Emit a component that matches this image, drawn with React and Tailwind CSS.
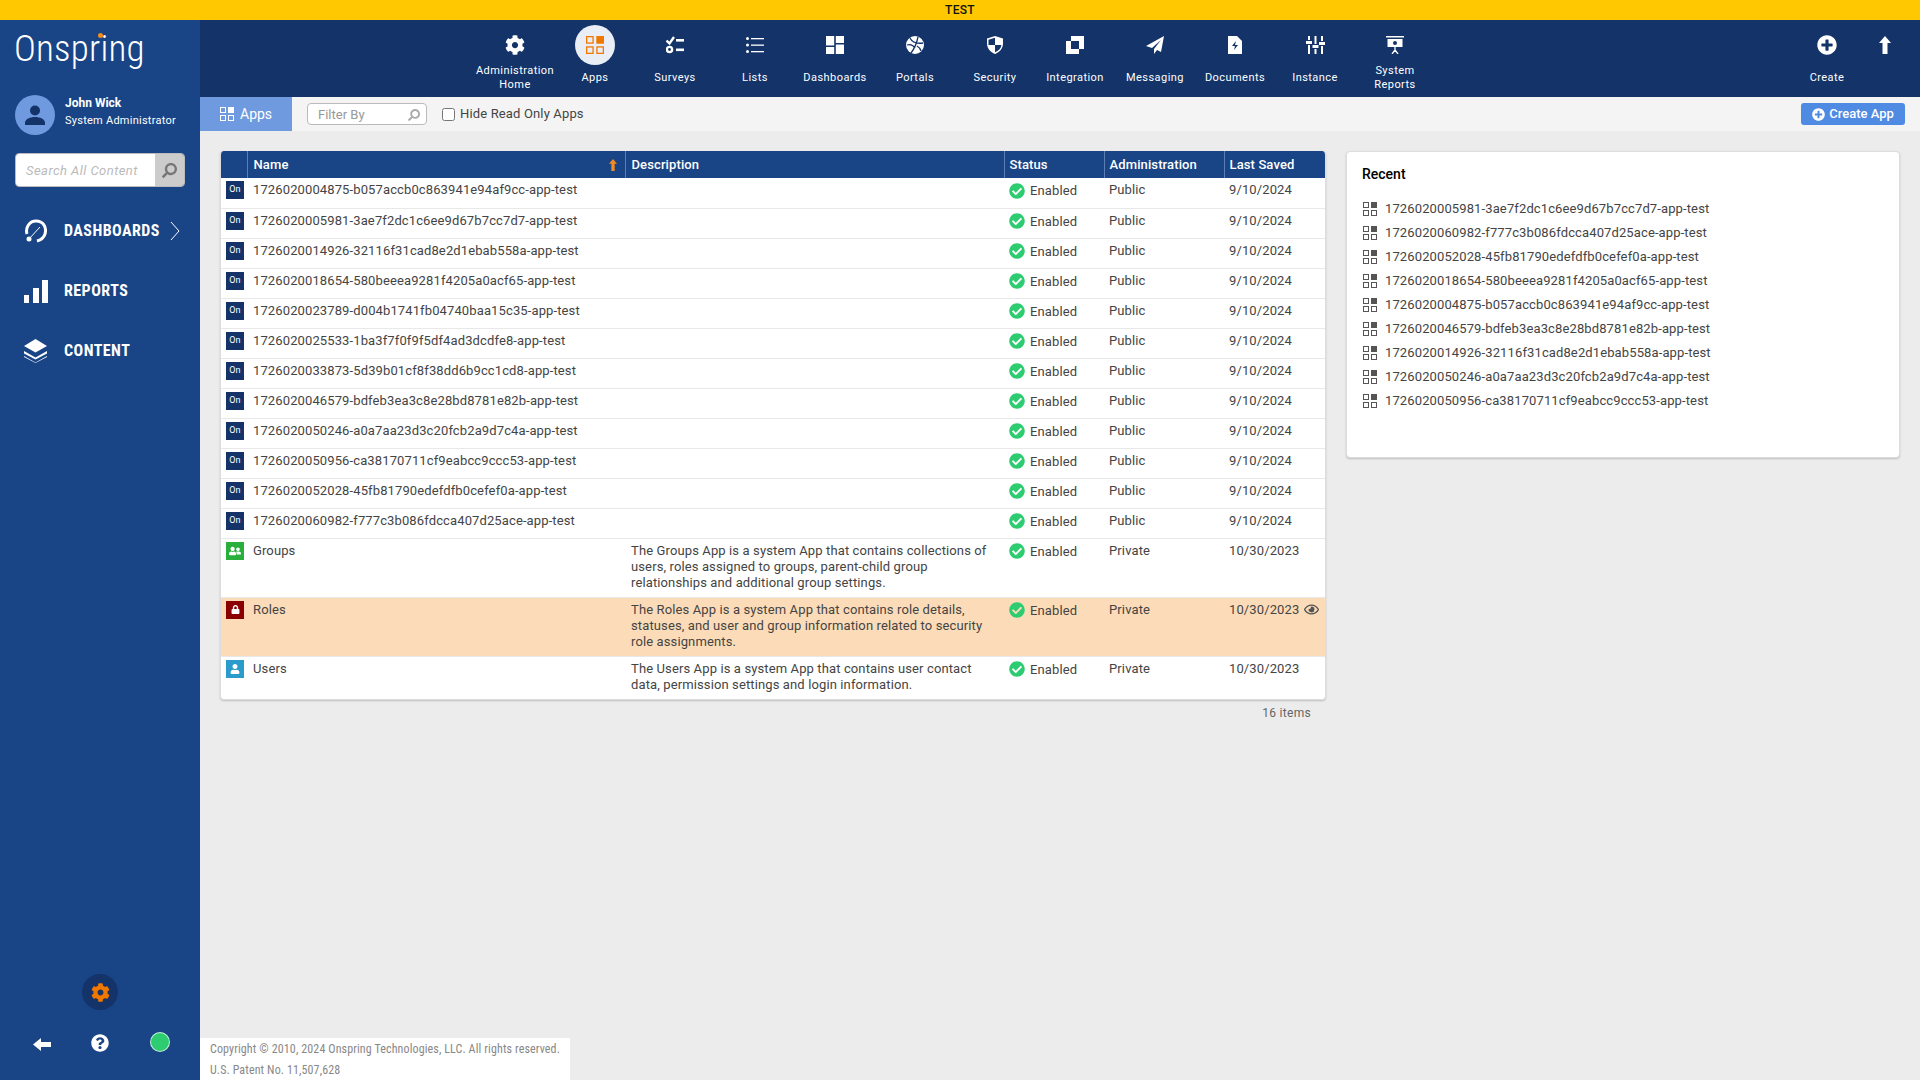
import { FaCog, FaPlusCircle, FaQuestionCircle, FaSearch, FaRegEye, FaCheckCircle, FaUser, FaLock, FaUserFriends } from "react-icons/fa";

const GridIcon = ({ size = 14, className = "", filled = "currentColor" }) => (
    <svg width={size} height={size} viewBox="0 0 14 14" className={className}>
        <rect x="0.5" y="0.5" width="5" height="5" fill="none" stroke="currentColor" />
        <rect x="8" y="0" width="6" height="6" fill={filled} />
        <rect x="0.5" y="8.5" width="5" height="5" fill="none" stroke="currentColor" />
        <rect x="8.5" y="8.5" width="5" height="5" fill="none" stroke="currentColor" />
    </svg>
);

const BlockArrowUp = ({ className = "", width = 12, height = 18 }) => (
    <svg width={width} height={height} viewBox="0 0 12 18" fill="currentColor" className={className}>
        <path d="M6 0l6 7H8.500v11h-5V7H0z" />
    </svg>
);

const SurveysIcon = () => (
    <svg width="18" height="18" viewBox="0 0 18 18" fill="white">
        <path d="M0.500 4.500l3 3 4.500-6.500" fill="none" stroke="white" strokeWidth="2.400" />
        <rect x="10" y="3" width="8" height="2.600" />
        <circle cx="3.500" cy="13.500" r="2.600" fill="none" stroke="white" strokeWidth="2.400" />
        <rect x="10" y="12.500" width="8" height="2.600" />
    </svg>
);
const ListsIcon = () => (
    <svg width="18" height="16" viewBox="0 0 18 16" fill="white">
        <circle cx="1.500" cy="1.500" r="1.500" />
        <rect x="5" y="1" width="13" height="1.300" />
        <circle cx="1.500" cy="8" r="1.500" />
        <rect x="5" y="7.500" width="13" height="1.300" />
        <circle cx="1.500" cy="14.500" r="1.500" />
        <rect x="5" y="14" width="13" height="1.300" />
    </svg>
);
const DashIcon = () => (
    <svg width="18" height="18" viewBox="0 0 18 18" fill="white">
        <rect x="0" y="0" width="8.200" height="9.500" />
        <rect x="9.800" y="0" width="8.200" height="7" />
        <rect x="0" y="11" width="8.200" height="7" />
        <rect x="9.800" y="8.500" width="8.200" height="9.500" />
    </svg>
);
const PortalIcon = () => (
    <svg width="18" height="18" viewBox="0 0 18 18">
        <circle cx="9" cy="9" r="9" fill="white" />
        <path d="M4 2c2 4 6 6 13 5M1 9c3-1 6 0 8 3M12 1C11 6 9 12 5 17M15 15c-1-3-2-4-4-5" fill="none" stroke="#133369" strokeWidth="1.300" />
    </svg>
);
const ShieldIcon = () => (
    <svg width="16" height="18" viewBox="0 0 16 18">
        <path d="M8 0l8 2.500v5c0 5-3.500 8.700-8 10.500-4.500-1.800-8-5.500-8-10.500v-5z" fill="white" />
        <path d="M8 1.800V9H1.500V3.700zM8 9h6.400C14 12.500 11.500 15 8 16.300z" fill="#133369" />
    </svg>
);
const IntegrationIcon = () => (
    <svg width="18" height="18" viewBox="0 0 18 18" fill="white">
        <rect x="5" y="0" width="13" height="13" />
        <rect x="0" y="5" width="13" height="13" />
        <rect x="5" y="5" width="8" height="8" fill="#133369" />
    </svg>
);
const PlaneIcon = () => (
    <svg width="18" height="18" viewBox="0 0 18 18" fill="white">
        <path d="M18 0L0 10l6 2 9-8-7 9v5l3-4 4 2z" />
    </svg>
);
const DocIcon = () => (
    <svg width="14" height="18" viewBox="0 0 14 18">
        <path d="M0 0h9l5 5v13H0z" fill="white" />
        <path d="M8 5L4 10h3l-1 4 4-5H7z" fill="#133369" />
    </svg>
);
const SlidersIcon = () => (
    <svg width="19" height="18" viewBox="0 0 19 18" fill="white">
        <rect x="2" y="0" width="2" height="4" />
        <rect x="0" y="5" width="6" height="3" />
        <rect x="2" y="9" width="2" height="9" />
        <rect x="8.500" y="0" width="2" height="8" />
        <rect x="6.500" y="9" width="6" height="3" />
        <rect x="8.500" y="13" width="2" height="5" />
        <rect x="15" y="0" width="2" height="5" />
        <rect x="13" y="6" width="6" height="3" />
        <rect x="15" y="10" width="2" height="8" />
    </svg>
);
const ReportIcon = () => (
    <svg width="18" height="18" viewBox="0 0 18 18" fill="white">
        <rect x="0" y="0" width="18" height="1.500" />
        <path d="M1.500 3h15v8h-15z" />
        <circle cx="9" cy="7" r="2" fill="#133369" />
        <path d="M9 11v3.500M9 14l-3 4M9 14l3 4" stroke="white" strokeWidth="1.300" fill="none" />
    </svg>
);

const NAV = [
    { label: ["Administration", "Home"], icon: <FaCog size={20} color="white" /> },
    { label: ["Apps"], icon: <GridIcon size={18} />, active: true },
    { label: ["Surveys"], icon: <SurveysIcon /> },
    { label: ["Lists"], icon: <ListsIcon /> },
    { label: ["Dashboards"], icon: <DashIcon /> },
    { label: ["Portals"], icon: <PortalIcon /> },
    { label: ["Security"], icon: <ShieldIcon /> },
    { label: ["Integration"], icon: <IntegrationIcon /> },
    { label: ["Messaging"], icon: <PlaneIcon /> },
    { label: ["Documents"], icon: <DocIcon /> },
    { label: ["Instance"], icon: <SlidersIcon /> },
    { label: ["System", "Reports"], icon: <ReportIcon /> },
];

const APPS = [
    "1726020004875-b057accb0c863941e94af9cc-app-test",
    "1726020005981-3ae7f2dc1c6ee9d67b7cc7d7-app-test",
    "1726020014926-32116f31cad8e2d1ebab558a-app-test",
    "1726020018654-580beeea9281f4205a0acf65-app-test",
    "1726020023789-d004b1741fb04740baa15c35-app-test",
    "1726020025533-1ba3f7f0f9f5df4ad3dcdfe8-app-test",
    "1726020033873-5d39b01cf8f38dd6b9cc1cd8-app-test",
    "1726020046579-bdfeb3ea3c8e28bd8781e82b-app-test",
    "1726020050246-a0a7aa23d3c20fcb2a9d7c4a-app-test",
    "1726020050956-ca38170711cf9eabcc9ccc53-app-test",
    "1726020052028-45fb81790edefdfb0cefef0a-app-test",
    "1726020060982-f777c3b086fdcca407d25ace-app-test",
];

const RECENT = [
    "1726020005981-3ae7f2dc1c6ee9d67b7cc7d7-app-test",
    "1726020060982-f777c3b086fdcca407d25ace-app-test",
    "1726020052028-45fb81790edefdfb0cefef0a-app-test",
    "1726020018654-580beeea9281f4205a0acf65-app-test",
    "1726020004875-b057accb0c863941e94af9cc-app-test",
    "1726020046579-bdfeb3ea3c8e28bd8781e82b-app-test",
    "1726020014926-32116f31cad8e2d1ebab558a-app-test",
    "1726020050246-a0a7aa23d3c20fcb2a9d7c4a-app-test",
    "1726020050956-ca38170711cf9eabcc9ccc53-app-test",
];

const SYSTEM = [
    {
        name: "Groups",
        bg: "bg-[#2aae3c]",
        icon: <FaUserFriends size={12} color="white" />,
        desc: "The Groups App is a system App that contains collections of users, roles assigned to groups, parent-child group relationships and additional group settings.",
    },
    {
        name: "Roles",
        bg: "bg-[#8b0000]",
        icon: <FaLock size={9} color="white" />,
        desc: "The Roles App is a system App that contains role details, statuses, and user and group information related to security role assignments.",
        hover: true,
    },
    {
        name: "Users",
        bg: "bg-[#2a9bcb]",
        icon: <FaUser size={10} color="white" />,
        desc: "The Users App is a system App that contains user contact data, permission settings and login information.",
    },
];

function Cells({ status = "Public", saved = "9/10/2024", desc, hover }) {
    return (
        <>
            <td className="align-top pl-[6px] pr-[4px] pt-[4px] leading-4">{desc}</td>
            <td className="align-top pl-[5px] pt-[4px]">
                <div className="flex items-center gap-[5px] leading-4">
                    <FaCheckCircle size={16} className="text-[#2ecc71]" />
                    <span className="pt-[1px]">Enabled</span>
                </div>
            </td>
            <td className="align-top px-[5px] pt-[4px] leading-4">{status}</td>
            <td className="align-top pl-[5px] pt-[4px] leading-4 relative">
                {saved}
                {hover && <FaRegEye size={15} className="absolute right-[6px] top-[4px] text-[#555]" />}
            </td>
        </>
    );
}

export default function App() {
    return (
        <div className="h-screen flex flex-col overflow-hidden bg-[#ececec] font-['Roboto',sans-serif]">
            <div className="h-5 shrink-0 bg-[#ffc800] flex items-center justify-center text-xs font-medium tracking-[0.3px] text-[#111]">TEST</div>

            <div className="flex flex-1 min-h-0">
                <aside className="w-[200px] shrink-0 bg-[#194485] flex flex-col text-white">
                    <div className="h-[75px] pl-[14px] pt-[7px]">
                        <span className="relative inline-block text-[37px] font-light leading-[44px] tracking-[0.2px] [font-stretch:75%]">
                            Onspring
                            <span className="absolute left-[84px] top-[6px] w-[5px] h-[5px] rounded-full bg-[#f58a1f]"></span>
                        </span>
                    </div>

                    <div className="flex items-start gap-[10px] pl-[15px]">
                        <div className="w-10 h-10 rounded-full bg-[#6f9adf] flex items-center justify-center">
                            <svg width="20" height="20" viewBox="0 0 20 20" fill="#133369">
                                <circle cx="10" cy="5.500" r="5" />
                                <path d="M0 20v-2c0-4 5-6 10-6s10 2 10 6v2z" />
                            </svg>
                        </div>
                        <div className="-mt-[1px]">
                            <div className="text-xs font-bold leading-[18px]">John Wick</div>
                            <div className="text-[11px] leading-[17px] tracking-[0.25px]">System Administrator</div>
                        </div>
                    </div>

                    <div className="mx-[15px] mt-[18px] h-[34px] flex rounded-[4px] overflow-hidden border border-[#bbb]">
                        <div className="flex-1 bg-white pl-[10px] text-[13px] italic text-[#bbb] leading-[33px] tracking-[0.45px]">Search All Content</div>
                        <div className="w-[29px] bg-[#ccc] flex items-center justify-center">
                            <FaSearch size={15} className="text-[#777] -scale-x-100" />
                        </div>
                    </div>

                    <nav className="mt-[14px] flex flex-col">
                        <div className="h-[60px] flex items-center pl-[24px]">
                            <svg width="23" height="24" viewBox="0 0 23 24" fill="none" stroke="white" strokeWidth="3">
                                <path d="M3 15C1 8 6 2 12 2c7 0 11 6 9 13-1 3-4 6-8 7" />
                                <path d="M5 20L16 8" strokeWidth="1" />
                                <circle cx="5" cy="20" r="2.500" fill="white" stroke="none" />
                            </svg>
                            <span className="ml-[17px] text-[16px] font-bold tracking-[0.45px] [font-stretch:86%]">DASHBOARDS</span>
                            <svg width="10" height="18" viewBox="0 0 10 18" fill="none" stroke="white" className="ml-[10px]">
                                <path d="M1 0l8 9-8 9" />
                            </svg>
                        </div>
                        <div className="h-[60px] flex items-center pl-[24px]">
                            <svg width="24" height="23" viewBox="0 0 24 23" fill="white">
                                <rect x="0" y="15" width="5" height="8" />
                                <rect x="9" y="8" width="6" height="15" />
                                <rect x="18" y="0" width="6" height="23" />
                            </svg>
                            <span className="ml-[16px] text-[16px] font-bold tracking-[0.45px] [font-stretch:86%]">REPORTS</span>
                        </div>
                        <div className="h-[60px] flex items-center pl-[24px]">
                            <svg width="23" height="24" viewBox="0 0 23 24" fill="white">
                                <path d="M11.500 0L23 7l-11.500 6.500L0 7z" />
                                <path d="M0 12l11.500 6.500L23 12v2.500l-11.500 6L0 14.500z" />
                                <path d="M0 17l11.500 6.500L23 17v1l-11.500 6L0 18z" />
                            </svg>
                            <span className="ml-[17px] text-[16px] font-bold tracking-[0.45px] [font-stretch:86%]">CONTENT</span>
                        </div>
                    </nav>

                    <div className="mt-auto flex justify-center">
                        <div className="w-9 h-9 rounded-full bg-[#133369] flex items-center justify-center">
                            <FaCog size={19} className="text-[#f07800]" />
                        </div>
                    </div>
                    <div className="h-[70px] flex items-start pt-[22px] pl-[33px]">
                        <svg width="18" height="13" viewBox="0 0 18 13" fill="white" className="mt-[6px]">
                            <path d="M0 6.500L8 0v4h10v5H8v4z" />
                        </svg>
                        <FaQuestionCircle size={18} className="ml-[40px] mt-[2px]" />
                        <div className="ml-[41px] w-5 h-5 rounded-full bg-[#2ecc71] border border-white/70"></div>
                    </div>
                </aside>

                <main className="flex-1 min-w-0 flex flex-col">
                    <div className="h-[77px] shrink-0 bg-[#133369] flex text-white pl-[275px]">
                        {NAV.map((item) => (
                            <div key={item.label[0]} className="w-20 flex flex-col items-center">
                                <div className={`mt-[5px] w-10 h-10 rounded-full flex items-center justify-center ${item.active ? "bg-[#e9edf5] text-[#f07800]" : ""}`}>
                                    {item.icon}
                                </div>
                                <div className={`text-[11px] tracking-[0.45px] text-center ${item.label.length > 1 ? "leading-[14px] mt-[-1px]" : "leading-[16px] mt-[5px]"}`}>
                                    {item.label.map((l) => (
                                        <div key={l}>{l}</div>
                                    ))}
                                </div>
                            </div>
                        ))}
                        <div className="ml-auto flex pr-[12px]">
                            <div className="w-[70px] flex flex-col items-center">
                                <div className="mt-[5px] h-10 flex items-center"><FaPlusCircle size={20} /></div>
                                <div className="mt-[5px] text-[11px] leading-[16px] tracking-[0.45px]">Create</div>
                            </div>
                            <div className="w-[46px] flex justify-center">
                                <div className="mt-[5px] h-10 flex items-center"><BlockArrowUp /></div>
                            </div>
                        </div>
                    </div>

                    <div className="h-[34px] shrink-0 bg-[#f4f4f4] flex items-center">
                        <div className="w-[92px] h-full bg-[#6f9adf] text-white flex items-center pl-5 gap-[6px] text-sm">
                            <GridIcon size={14} />
                            Apps
                        </div>
                        <div className="ml-[15px] w-[120px] h-[22px] bg-white border border-[#bbb] rounded-[4px] flex items-center justify-between pl-[10px] pr-[6px] pt-[1px] text-[13px] text-[#999]">
                            Filter By
                            <FaSearch size={12} className="text-[#aaa] -scale-x-100" />
                        </div>
                        <label className="ml-[15px] flex items-center gap-[5px] text-[13px] text-[#444] tracking-[0.15px]">
                            <input type="checkbox" className="w-[13px] h-[13px]" />
                            Hide Read Only Apps
                        </label>
                        <div className="ml-auto mr-[15px] w-[104px] h-[22px] rounded-[3px] bg-[#4f8ae3] text-white text-[13px] font-medium flex items-center justify-center gap-[4px]">
                            <FaPlusCircle size={13} />
                            Create App
                        </div>
                    </div>

                    <div className="flex-1 min-h-0 flex items-start gap-5 pt-5 pl-5 pr-5">
                        <div className="w-[1106px] shrink-0">
                            <div className="bg-white rounded-[4px] border-x border-b border-[#ddd] shadow-[0_1px_2px_rgba(0,0,0,0.2)] overflow-hidden">
                                <table className="w-full table-fixed border-collapse text-[13px] text-[#444] tracking-[0.12px]">
                                    <colgroup>
                                        <col className="w-[26px]" />
                                        <col className="w-[378px]" />
                                        <col className="w-[379px]" />
                                        <col className="w-[100px]" />
                                        <col className="w-[120px]" />
                                        <col />
                                    </colgroup>
                                    <thead>
                                        <tr className="h-[27px] bg-[#194485] text-white text-left font-medium">
                                            <th className="border-r border-[#5b7fb5]"></th>
                                            <th className="pl-[6px] font-medium border-r border-[#5b7fb5] relative">
                                                Name
                                                <BlockArrowUp width={8} height={12} className="absolute right-[8px] top-[8px] text-[#f58a1f]" />
                                            </th>
                                            <th className="pl-[6px] font-medium border-r border-[#5b7fb5]">Description</th>
                                            <th className="px-[5px] font-medium border-r border-[#5b7fb5]">Status</th>
                                            <th className="px-[5px] font-medium border-r border-[#5b7fb5]">Administration</th>
                                            <th className="px-[5px] font-medium">Last Saved</th>
                                        </tr>
                                    </thead>
                                    <tbody>
                                        {APPS.map((name) => (
                                            <tr key={name} className="h-[30px] border-b border-[#e8e8e8]">
                                                <td className="align-top pl-[5px] pt-[3px]">
                                                    <div className="w-[18px] h-[18px] bg-[#133369] text-white text-[9px] flex items-center justify-center">On</div>
                                                </td>
                                                <td className="align-top pl-[6px] pt-[4px] leading-4">{name}</td>
                                                <Cells />
                                            </tr>
                                        ))}
                                        {SYSTEM.map((app, i) => (
                                            <tr key={app.name} className={`${i === 2 ? "h-[43px]" : "h-[59px] border-b border-[#e8e8e8]"} ${app.hover ? "bg-[#fcdcb8]" : ""}`}>
                                                <td className="align-top pl-[5px] pt-[3px]">
                                                    <div className={`w-[18px] h-[18px] ${app.bg} flex items-center justify-center`}>{app.icon}</div>
                                                </td>
                                                <td className="align-top pl-[6px] pt-[4px] leading-4">{app.name}</td>
                                                <Cells status="Private" saved="10/30/2023" desc={app.desc} hover={app.hover} />
                                            </tr>
                                        ))}
                                    </tbody>
                                </table>
                            </div>
                            <div className="mt-[5px] pr-[15px] text-right text-xs text-[#666] tracking-[0.3px]">16 items</div>
                        </div>

                        <div className="flex-1 h-[307px] bg-white rounded-[4px] border border-[#ddd] shadow-[0_1px_2px_rgba(0,0,0,0.2)] px-[15px] pt-[14px]">
                            <div className="text-sm font-medium text-black leading-4">Recent</div>
                            <div className="mt-[15px] pl-[1px] flex flex-col">
                                {RECENT.map((name) => (
                                    <div key={name} className="h-6 flex items-center gap-[8px] text-[13px] text-[#444] tracking-[0.12px]">
                                        <GridIcon size={14} className="text-[#555]" />
                                        {name}
                                    </div>
                                ))}
                            </div>
                        </div>
                    </div>

                    <div className="w-[370px] h-[42px] shrink-0 bg-white pl-[10px] pt-[1px] text-xs text-[#888] leading-[21px] tracking-[0.12px] [font-stretch:75%]">
                        <div>Copyright © 2010, 2024 Onspring Technologies, LLC. All rights reserved.</div>
                        <div>U.S. Patent No. 11,507,628</div>
                    </div>
                </main>
            </div>
        </div>
    );
}
